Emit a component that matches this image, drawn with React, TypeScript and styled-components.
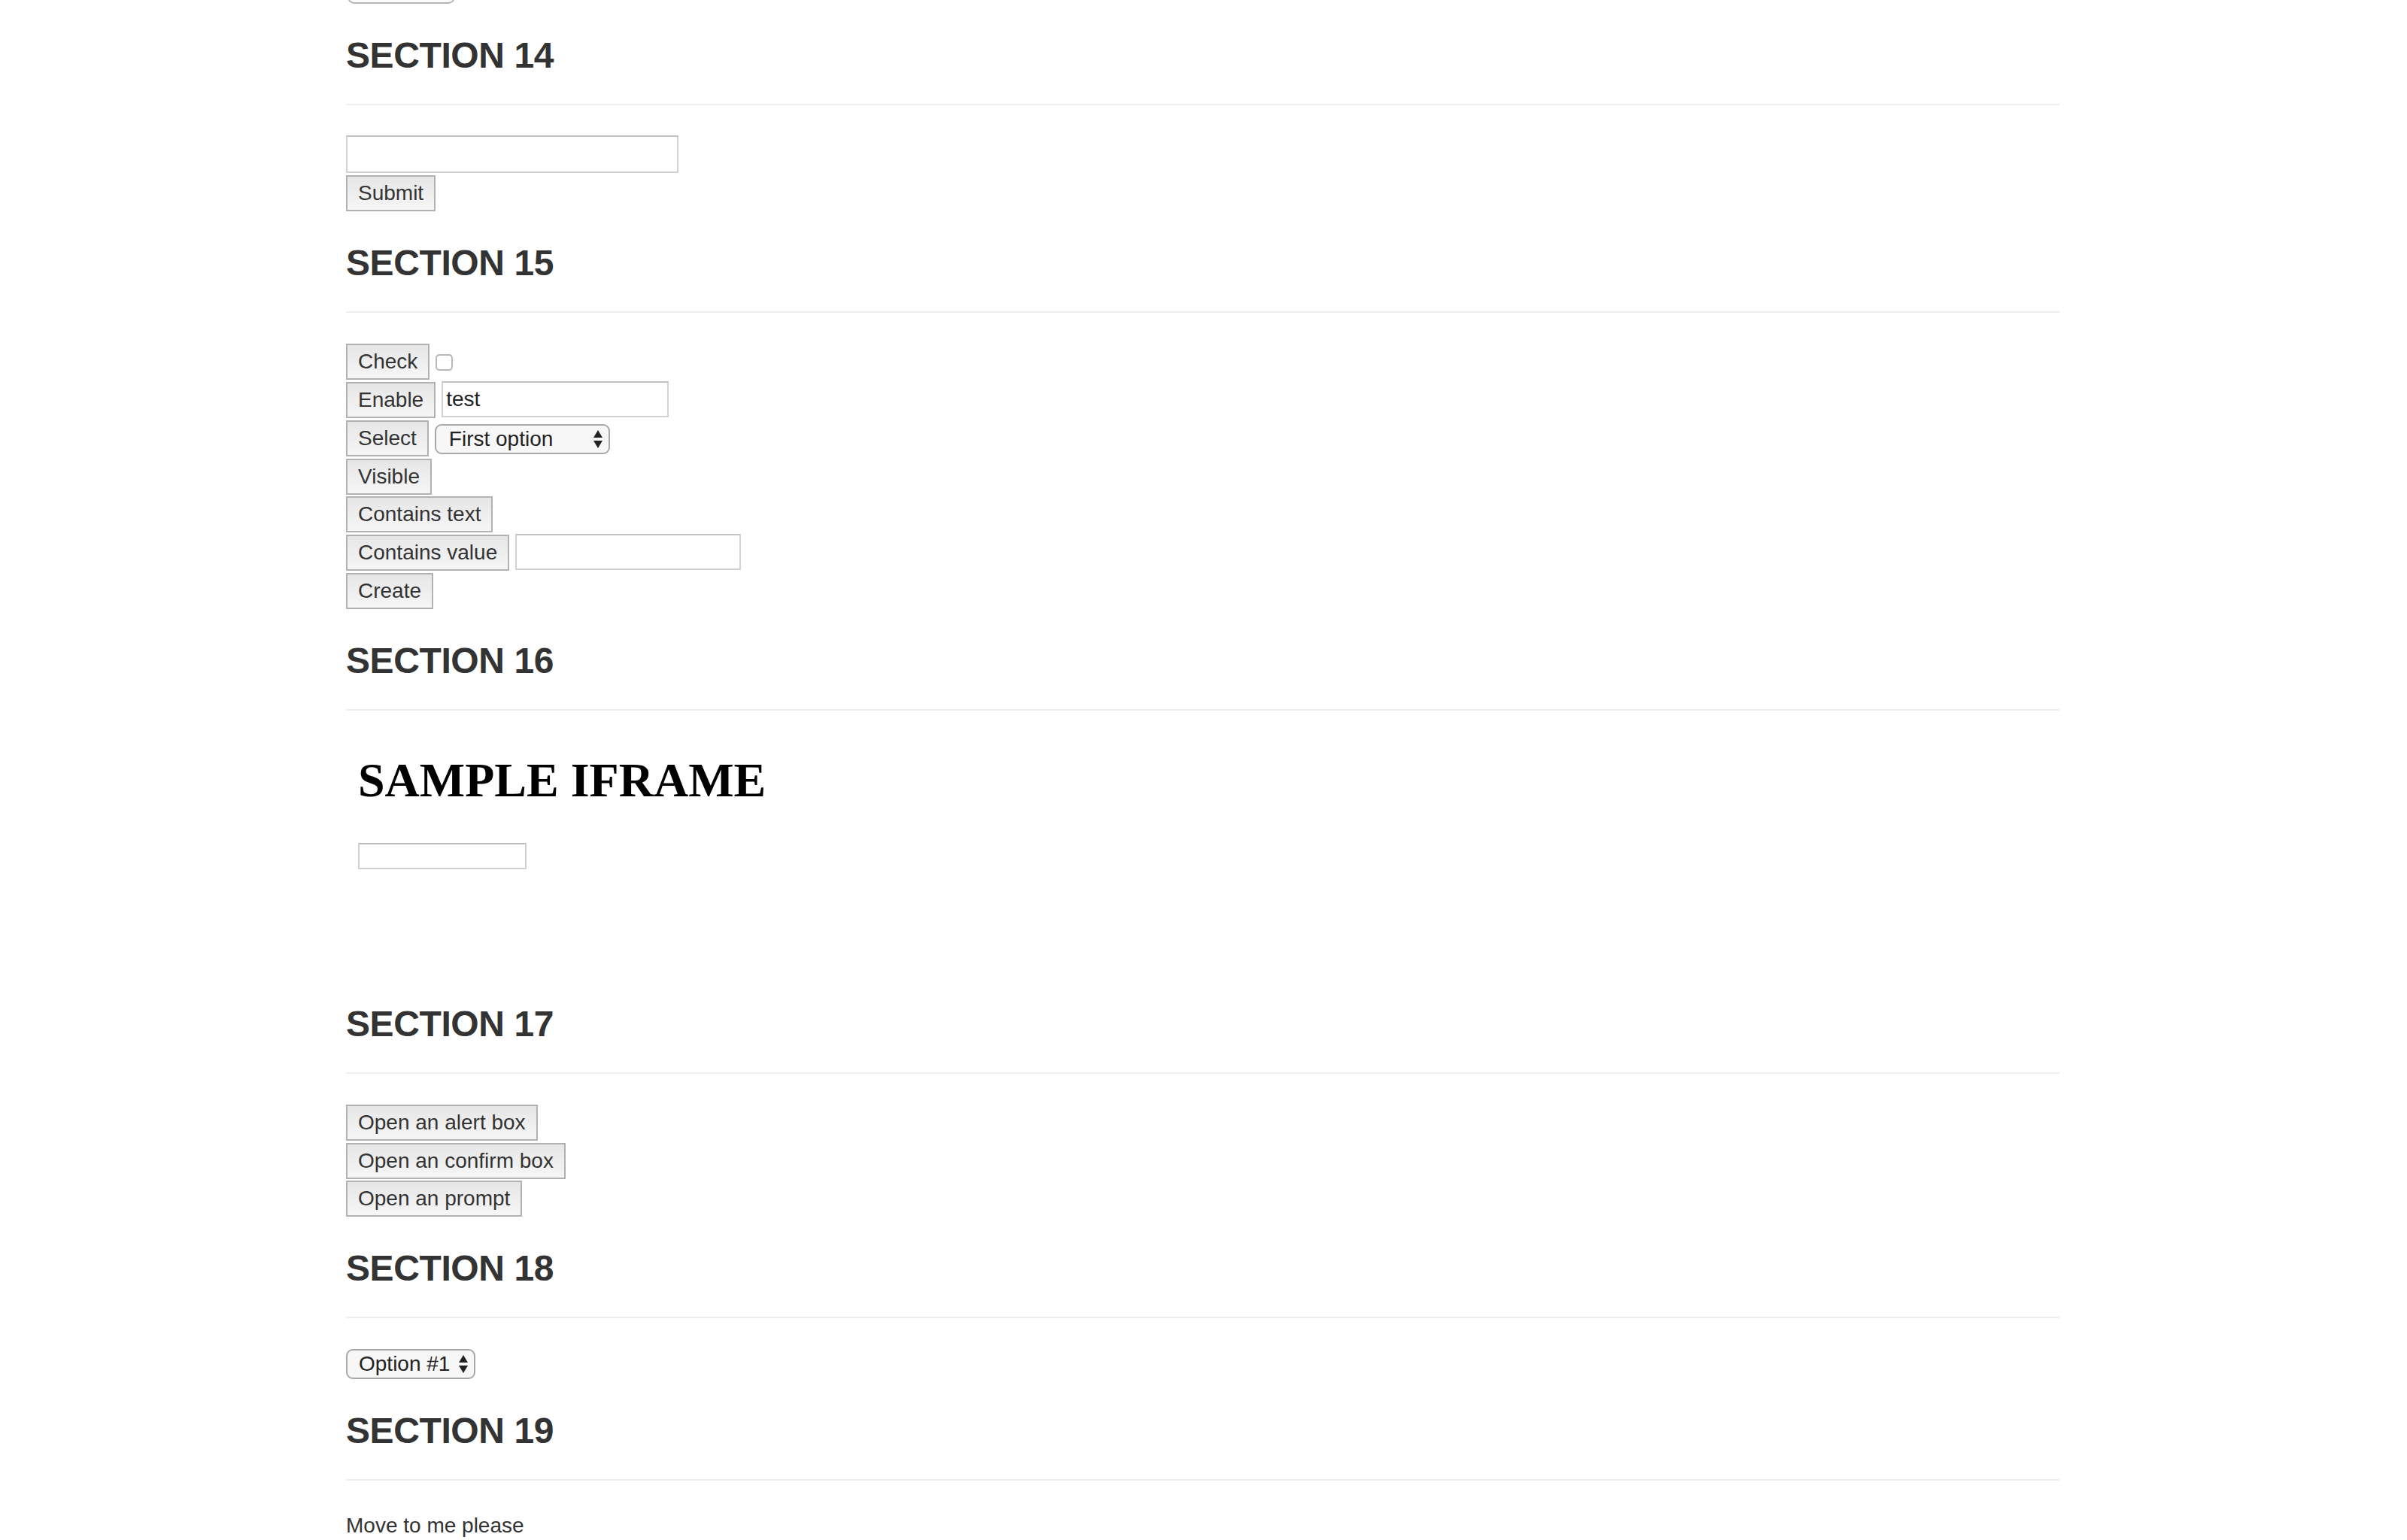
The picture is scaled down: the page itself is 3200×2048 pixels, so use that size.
import React from 'react'
import styled, { createGlobalStyle } from 'styled-components'

const GlobalStyle = createGlobalStyle`
  html, body {
    margin: 0;
    padding: 0;
    background: #fff;
  }
  body {
    font-family: "Liberation Sans", Arial, Helvetica, sans-serif;
    font-size: 28px;
    color: #333;
    overflow: hidden;
  }
`

function SelectArrows() {
  return (
    <svg width="12" height="24" viewBox="0 0 12 24">
      <polygon points="0,10 6,0 12,10" fill="#222" />
      <polygon points="0,14 12,14 6,24" fill="#222" />
    </svg>
  )
}

export default function App() {
  return (
    <>
      <GlobalStyle />
      <Page>
        {/* tail of section 13, scrolled mostly out of view */}
        <Row $height={43}>
          <RoundButton aria-label="Section 13 action" />
        </Row>

        <Section>
          <Header>
            <Title>SECTION 14</Title>
          </Header>
          <Row $height={52}>
            <TextInput $width={442} $height={50} />
          </Row>
          <Row $height={51}>
            <Button>Submit</Button>
          </Row>
        </Section>

        <Section>
          <Header>
            <Title>SECTION 15</Title>
          </Header>
          <Row>
            <Button>Check</Button>
            <Checkbox />
          </Row>
          <Row>
            <Button>Enable</Button>
            <TextInput $width={302} $height={48} defaultValue="test" />
          </Row>
          <Row>
            <Button>Select</Button>
            <SelectBox $width={233} $padLeft={17} $offset={5}>
              <span>First option</span>
              <SelectArrows />
            </SelectBox>
          </Row>
          <Row>
            <Button>Visible</Button>
          </Row>
          <Row>
            <Button>Contains text</Button>
          </Row>
          <Row>
            <Button>Contains value</Button>
            <TextInput $width={300} $height={48} />
          </Row>
          <Row>
            <Button>Create</Button>
          </Row>
        </Section>

        <Section>
          <Header>
            <Title>SECTION 16</Title>
          </Header>
          <FrameBox>
            <FrameTitle>SAMPLE IFRAME</FrameTitle>
            <FrameInput />
          </FrameBox>
        </Section>

        <Section>
          <Header>
            <Title>SECTION 17</Title>
          </Header>
          <Row $height={50.67}>
            <Button>Open an alert box</Button>
          </Row>
          <Row $height={50.67}>
            <Button>Open an confirm box</Button>
          </Row>
          <Row $height={50.67}>
            <Button>Open an prompt</Button>
          </Row>
        </Section>

        <Section>
          <Header>
            <Title>SECTION 18</Title>
          </Header>
          <Row $height={43}>
            <SelectBox $width={172} $padLeft={15} $offset={0}>
              <span>Option #1</span>
              <SelectArrows />
            </SelectBox>
          </Row>
        </Section>

        <Section>
          <Header>
            <Title>SECTION 19</Title>
          </Header>
          <Text>Move to me please</Text>
        </Section>
      </Page>
    </>
  )
}

const Page = styled.div`
  margin-top: -36px;
  margin-left: 460px;
  width: 2278px;
  display: flex;
  flex-direction: column;
`

const Section = styled.section`
  margin-top: 40px;
  display: flex;
  flex-direction: column;
`

const Header = styled.div`
  padding-bottom: 38px;
  border-bottom: 2px solid #eee;
  margin-bottom: 40px;
`

const Title = styled.h3`
  margin: 0;
  font-family: "Liberation Sans", Arial, Helvetica, sans-serif;
  font-size: 48px;
  font-weight: 700;
  line-height: 53px;
  letter-spacing: -0.4px;
  color: #333;
`

const Row = styled.div<{ $height?: number }>`
  display: flex;
  align-items: flex-start;
  gap: 8px;
  height: ${p => p.$height ?? 50.85}px;
  padding-top: 1px;
  box-sizing: border-box;
`

const Button = styled.button`
  box-sizing: border-box;
  height: 48px;
  padding: 0 14px;
  border: 2px solid #b2b2b2;
  border-radius: 0;
  background: linear-gradient(#e6e6e6, #f6f6f6);
  font-family: "Liberation Sans", Arial, Helvetica, sans-serif;
  font-size: 28px;
  color: #333;
  white-space: nowrap;
`

const RoundButton = styled.button`
  box-sizing: border-box;
  width: 143px;
  height: 40px;
  margin-left: 2px;
  border: 2px solid #b5b5b5;
  border-radius: 9px;
  background: #fbfbfb;
`

const TextInput = styled.input<{ $width: number; $height: number }>`
  box-sizing: border-box;
  width: ${p => p.$width}px;
  height: ${p => p.$height}px;
  margin-top: -1px;
  padding: 0 4px;
  border: 2px solid #d2d2d2;
  border-top-color: #c2c2c2;
  background: #fff;
  font-family: "Liberation Sans", Arial, Helvetica, sans-serif;
  font-size: 28px;
  color: #222;
  outline: none;
`

const Checkbox = styled.span`
  box-sizing: border-box;
  width: 23px;
  height: 22px;
  margin-top: 14px;
  border: 2px solid #b8b8b8;
  border-radius: 5px;
  background: #fff;
`

const SelectBox = styled.div<{ $width: number; $padLeft: number; $offset: number }>`
  box-sizing: border-box;
  display: flex;
  align-items: center;
  justify-content: space-between;
  width: ${p => p.$width}px;
  height: 40px;
  margin-top: ${p => p.$offset}px;
  padding: 0 8px 0 ${p => p.$padLeft}px;
  border: 2px solid #a8a8a8;
  border-radius: 9px;
  background: #f7f7f7;
  font-size: 28px;
  color: #222;

  svg {
    flex: none;
  }
`

const FrameBox = styled.div`
  box-sizing: border-box;
  width: 600px;
  height: 300px;
  margin-bottom: 10px;
  padding: 16px;
  font-family: "Liberation Serif", "Times New Roman", serif;
  color: #000;
`

const FrameTitle = styled.h1`
  margin: 0 0 43px;
  font-family: "Liberation Serif", "Times New Roman", serif;
  font-size: 64px;
  font-weight: 700;
  line-height: normal;
`

const FrameInput = styled.input`
  box-sizing: border-box;
  width: 224px;
  height: 35px;
  padding: 0 4px;
  border: 2px solid #d0d0d0;
  border-top-color: #c0c0c0;
  background: #fff;
  outline: none;
`

const Text = styled.div`
  font-size: 28px;
  line-height: 40px;
  color: #333;
`
